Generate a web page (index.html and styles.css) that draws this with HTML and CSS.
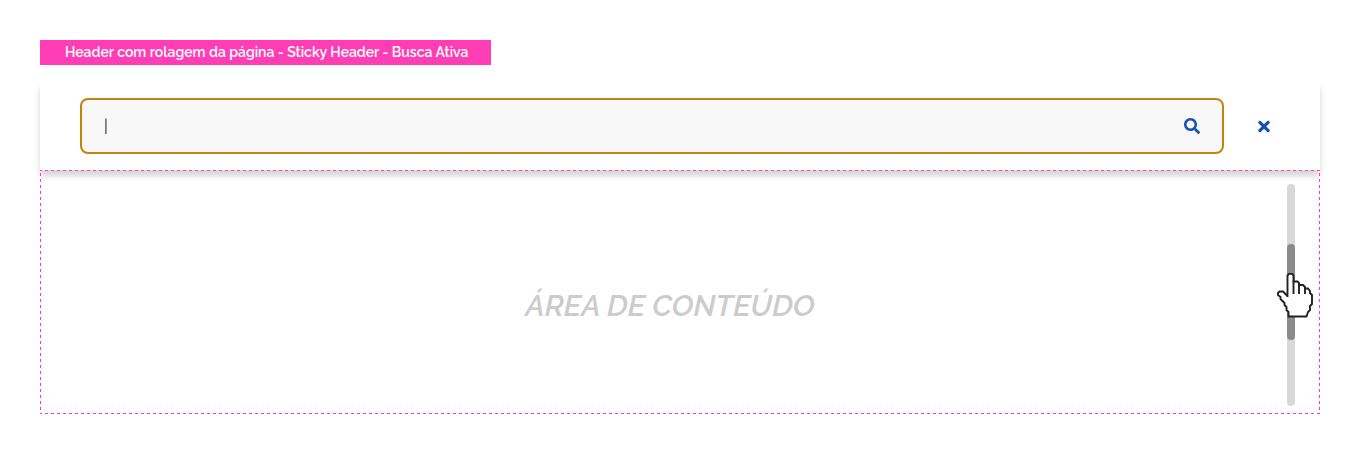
FILE: index.html
```html
<!DOCTYPE html>
<html lang="pt-BR">
<head>
<meta charset="utf-8">
<meta name="viewport" content="width=device-width, initial-scale=1">
<title>Sticky Header - Busca Ativa</title>
<link rel="stylesheet" href="styles.css">
</head>
<body>
<main class="page">
  <h1 class="tag">Header com rolagem da página - Sticky Header - Busca Ativa</h1>
  <section class="frame">
    <header class="header">
      <form class="search" role="search">
        <input class="search-input" type="text" aria-label="Buscar" value="|">
        <button class="icon-button" type="submit" aria-label="Buscar">
          <svg class="icon" viewBox="0 0 512 512" aria-hidden="true"><path d="M505 442.700L405.300 343c-4.500-4.500-10.600-7-17-7H372c27.600-35.300 44-79.700 44-128C416 93.100 322.900 0 208 0S0 93.100 0 208s93.100 208 208 208c48.300 0 92.700-16.400 128-44v16.300c0 6.400 2.500 12.500 7 17l99.700 99.700c9.400 9.400 24.600 9.400 33.900 0l28.300-28.300c9.400-9.400 9.400-24.600.1-34zM208 336c-70.700 0-128-57.200-128-128 0-70.700 57.200-128 128-128 70.700 0 128 57.200 128 128 0 70.700-57.200 128-128 128z"/></svg>
        </button>
      </form>
      <button class="icon-button" type="button" aria-label="Fechar busca">
        <svg class="icon icon-close" viewBox="0 0 352 512" aria-hidden="true"><path d="M242.720 256l100.070-100.070c12.280-12.280 12.280-32.190 0-44.480l-22.240-22.240c-12.280-12.280-32.190-12.280-44.480 0L176 189.280 75.930 89.210c-12.280-12.280-32.190-12.280-44.480 0L9.210 111.450c-12.280 12.280-12.280 32.190 0 44.480L109.280 256 9.210 356.070c-12.280 12.280-12.280 32.190 0 44.480l22.240 22.240c12.280 12.280 32.200 12.280 44.480 0L176 322.720l100.070 100.070c12.280 12.280 32.200 12.280 44.480 0l22.240-22.240c12.280-12.280 12.280-32.190 0-44.480L242.720 256z"/></svg>
      </button>
    </header>
    <div class="content">
      <p class="content-label">ÁREA DE CONTEÚDO</p>
      <div class="track">
        <div class="thumb"></div>
        <svg class="pointer" viewBox="0 0 36 45" aria-hidden="true">
          <path d="M10.500 24V2.500L12 .8h3L16.500 2.500V8.500h4L22 10v2h4L28 14v1.500h3L33 18v2l2 2v9l-2 2v4l-2 2-1.500 4.500H11.500V39l-2-2v-3l-2-2v-2l-4-4v-2L1 22v-2l1.500-1.500H6l4.500 4.500z" fill="#fff" stroke="#222" stroke-width="1.900"/>
          <path d="M16.500 8v13M22 11v10M28 15v6" fill="none" stroke="#222" stroke-width="1.900"/>
        </svg>
      </div>
    </div>
  </section>
</main>
</body>
</html>
```
FILE: styles.css
```css
* { box-sizing: border-box; }

body {
  margin: 0;
  background: #fff;
  font-family: Raleway, Lato, "Open Sans", sans-serif;
}

.page { padding: 40px; }

.tag {
  width: fit-content;
  margin: 0;
  padding: 0 23px 0 25px;
  background: #ff3eb5;
  color: #fff;
  font-size: 14px;
  font-weight: 600;
  line-height: 25px;
}

.frame { margin-top: 17px; }

.header {
  display: flex;
  align-items: center;
  gap: 20px;
  padding: 16px 36px 16px 40px;
  background: #fff;
  box-shadow: 0 6px 6px rgba(0, 0, 0, 0.16);
}

.search {
  display: flex;
  flex: 1;
  align-items: center;
  height: 56px;
  padding: 0 10px 0 22px;
  border: 2px solid #c2850c;
  border-radius: 8px;
  background: #f8f8f8;
}

.search-input {
  flex: 1;
  min-width: 0;
  padding: 2px 0 0;
  border: 0;
  outline: 0;
  background: transparent;
  color: #444;
  font: 500 16px/24px Raleway, sans-serif;
  will-change: transform;
}

.icon-button {
  display: grid;
  place-items: center;
  width: 40px;
  height: 40px;
  padding: 0;
  border: 0;
  background: transparent;
  color: #1351b4;
}

.icon {
  width: 16px;
  height: 16px;
  fill: currentColor;
}

.icon-close {
  width: 18px;
  height: 17px;
}

.content {
  --pink: #ff3eb5;
  --dash-x: repeating-linear-gradient(90deg, var(--pink) 0 3px, transparent 3px 6px);
  --dash-y: repeating-linear-gradient(var(--pink) 0 3px, transparent 3px 6px);
  position: relative;
  display: flex;
  align-items: center;
  padding: 14px 25px 8px 40px;
  background:
    var(--dash-x) -1px 0 / 1284px 1px repeat-x,
    var(--dash-x) -1px 100% / 1284px 1px repeat-x,
    var(--dash-y) 0 3px / 1px 240px repeat-y,
    var(--dash-y) 100% 3px / 1px 240px repeat-y;
}

.content-label {
  flex: 1;
  margin: 0;
  padding: 22px 27px 0 0;
  color: #ccc;
  font-size: 30px;
  font-style: italic;
  font-weight: 600;
  line-height: 40px;
  text-align: center;
}

.track {
  position: relative;
  width: 8px;
  height: 222px;
  padding-top: 60px;
  border-radius: 4px;
  background: #d8d8d8;
}

.thumb {
  height: 96px;
  border-radius: 4px;
  background: #8b8b8b;
}

.pointer {
  position: absolute;
  top: 89px;
  left: -10px;
  width: 36px;
  height: 45px;
}
```
